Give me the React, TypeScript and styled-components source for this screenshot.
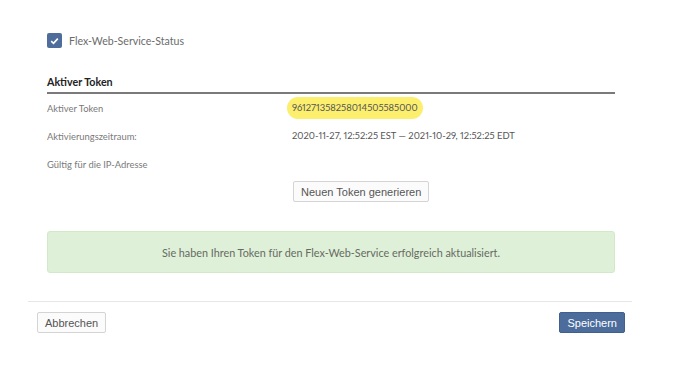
import React from "react";
import styled, { createGlobalStyle } from "styled-components";

const Global = createGlobalStyle`
  html, body { margin: 0; padding: 0; background: #ffffff; }
  body { font-family: Lato, "Open Sans", sans-serif; font-variant-numeric: proportional-nums; }
`;

const Page = styled.div`
  width: 604px;
  margin-left: 28px;
  padding-top: 33px;
`;

const Content = styled.div`
  padding: 0 17px 0 19px;
`;

const CheckRow = styled.label`
  display: flex;
  align-items: center;
  gap: 7px;
  height: 15px;
  font-size: 10.6px;
  color: #6b6b6b;
`;

const CheckBox = styled.span`
  width: 15px;
  height: 15px;
  border-radius: 2px;
  background: #4f6d9b;
  display: flex;
  align-items: center;
  justify-content: center;
`;

const SectionTitle = styled.div`
  margin-top: 27px;
  padding-bottom: 3px;
  border-bottom: 2px solid #7a7a7a;
  font-size: 10.7px;
  font-weight: 700;
  color: #222;
  line-height: 14px;
`;

const Table = styled.div`
  display: grid;
  grid-template-columns: 240px 1fr;
  grid-auto-rows: 28px;
  align-items: center;
`;

const Label = styled.div`
  font-size: 9.4px;
  color: #7a7a7a;
`;

const Value = styled.div`
  font-size: 9.4px;
  color: #555555;
`;

const Mark = styled.span<{ $highlight?: boolean }>`
  display: inline-block;
  padding: 0 5px;
  line-height: 22px;
  border-radius: 11px;
  background: ${(p) => (p.$highlight ? "#fcef6e" : "transparent")};
`;

const ActionRow = styled.div`
  display: grid;
  grid-template-columns: 246px auto;
  justify-content: start;
  margin-top: 3px;
`;

const Button = styled.button<{ $primary?: boolean }>`
  font-family: "Liberation Sans", Arial, sans-serif;
  font-size: 11px;
  height: 21px;
  padding: 0 7px;
  border-radius: 2px;
  border: 1px solid ${(p) => (p.$primary ? "#41608c" : "#d4d4d4")};
  background: ${(p) => (p.$primary ? "#4c6c9c" : "#fbfbfb")};
  color: ${(p) => (p.$primary ? "#ffffff" : "#555555")};
  cursor: pointer;
`;

const Alert = styled.div`
  margin-top: 29px;
  height: 42px;
  display: flex;
  align-items: center;
  justify-content: center;
  background: #dff0d8;
  border: 1px solid #d3e8c8;
  border-radius: 3px;
  box-sizing: border-box;
  font-size: 10.8px;
  color: #666a62;
`;

const Footer = styled.div`
  margin-top: 28px;
  border-top: 1px solid #e6e6e6;
  padding: 10px 7px 0 9px;
  display: flex;
  justify-content: space-between;
`;

export default function App() {
  return (
    <>
      <Global />
      <Page>
        <Content>
          <CheckRow>
            <CheckBox>
              <svg width="9" height="8" viewBox="0 0 9 8">
                <path d="M1.2 4.2 L3.5 6.3 L7.8 1.6" fill="none" stroke="#fff" strokeWidth="1.6" />
              </svg>
            </CheckBox>
            Flex-Web-Service-Status
          </CheckRow>
          <SectionTitle>Aktiver Token</SectionTitle>
          <Table>
            <Label>Aktiver Token</Label>
            <Value>
              <Mark $highlight>961271358258014505585000</Mark>
            </Value>
            <Label>Aktivierungszeitraum:</Label>
            <Value>
              <Mark>2020-11-27, 12:52:25 EST — 2021-10-29, 12:52:25 EDT</Mark>
            </Value>
            <Label>Gültig für die IP-Adresse</Label>
            <Value />
          </Table>
          <ActionRow>
            <span />
            <Button>Neuen Token generieren</Button>
          </ActionRow>
          <Alert>Sie haben Ihren Token für den Flex-Web-Service erfolgreich aktualisiert.</Alert>
        </Content>
        <Footer>
          <Button>Abbrechen</Button>
          <Button $primary>Speichern</Button>
        </Footer>
      </Page>
    </>
  );
}
